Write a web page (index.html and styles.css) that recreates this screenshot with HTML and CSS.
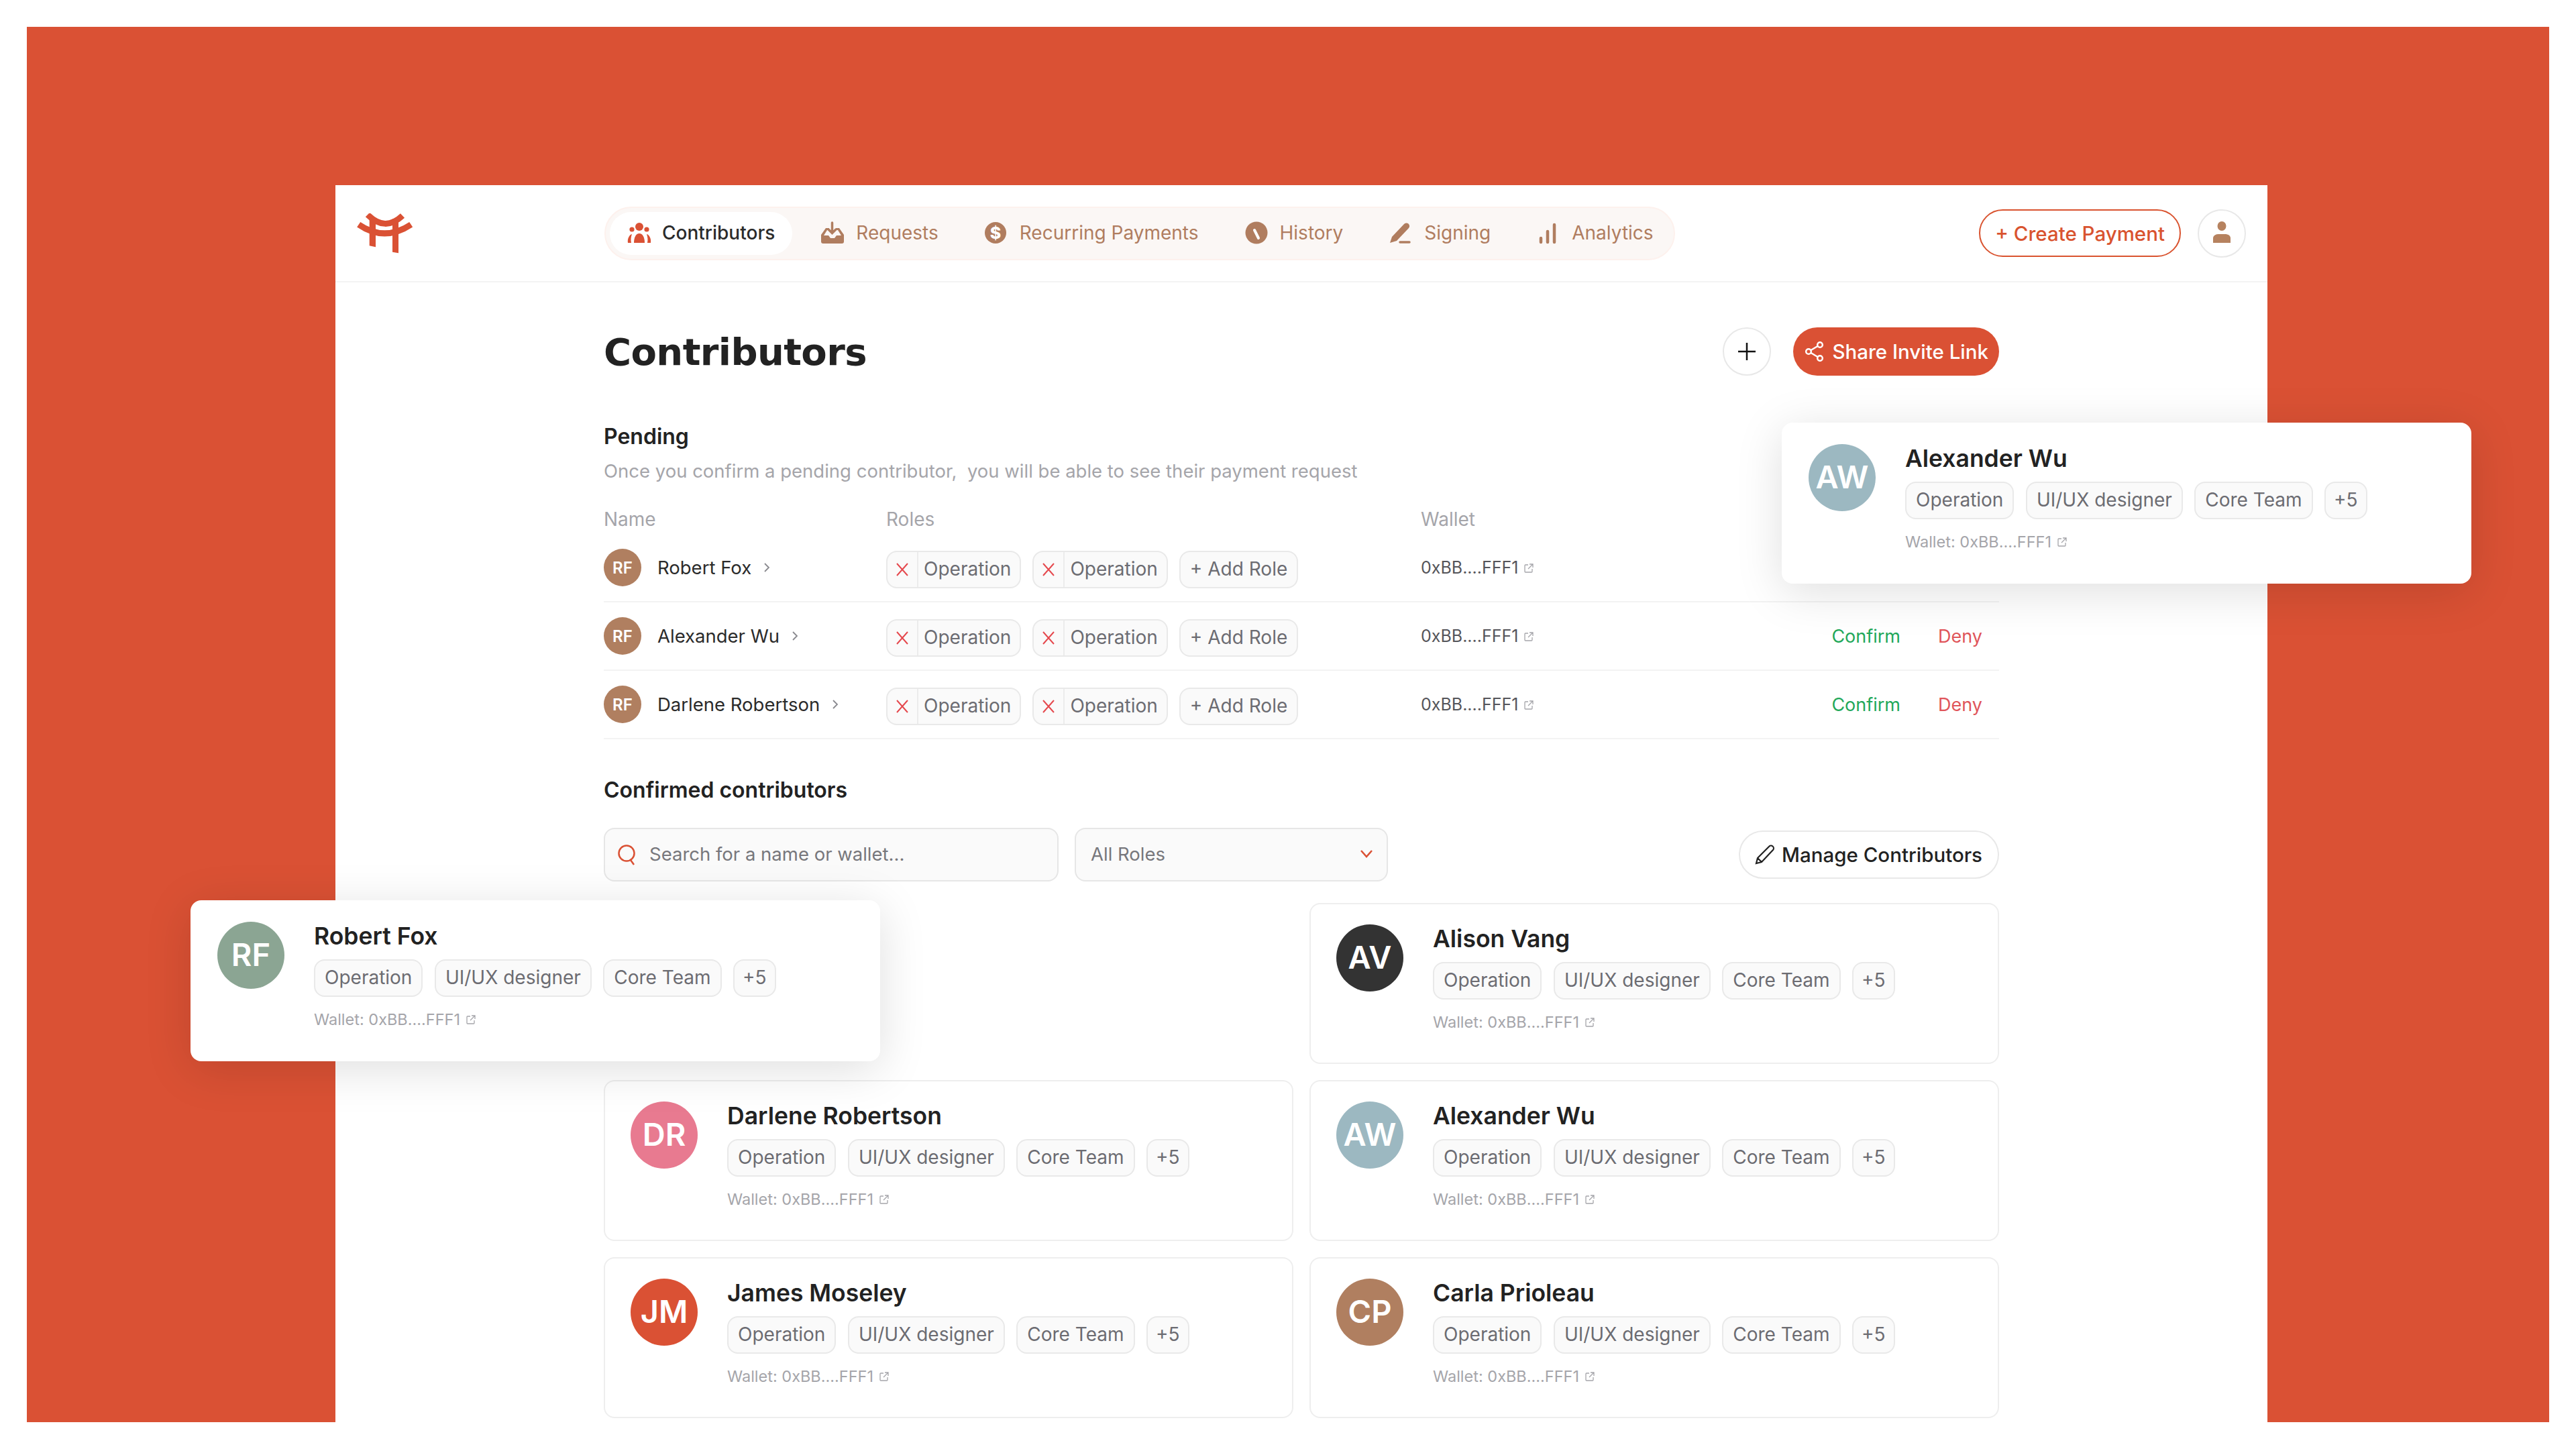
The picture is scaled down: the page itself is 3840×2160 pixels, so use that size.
FILE: index.html
```html
<!DOCTYPE html>
<html lang="en">
<head>
    <meta charset="UTF-8">
    <title>Contributors</title>
    <link rel="stylesheet" href="styles.css">
</head>
<body>
    <svg class="sprite" xmlns="http://www.w3.org/2000/svg">
        <symbol id="i-people" viewBox="0 0 36 34">
            <circle cx="18" cy="8" r="6"/><circle cx="7" cy="12" r="3.6"/><circle cx="29" cy="12" r="3.6"/>
            <path d="M10 32C10 24 13 18 18 18S26 24 26 32z"/>
            <path d="M1 32C0 26 3 20 7 19 5.500 23 5 28 6 32z"/><path d="M35 32C36 26 33 20 29 19 30.500 23 31 28 30 32z"/>
        </symbol>
        <symbol id="i-inbox" viewBox="0 0 34 34">
            <path d="M7 10h5v3H9L4 21h7l3 4h6l3-4h7l-5-8h-3v-3h5l7 10v10a3 3 0 0 1-3 3H3a3 3 0 0 1-3-3V20z"/>
            <path class="i-line" d="M16.500 2v15M11 12l5.500 5.500L22 12"/>
        </symbol>
        <symbol id="i-dollar" viewBox="0 0 34 34">
            <circle cx="16" cy="17" r="16"/>
            <text class="i-dollar-text" x="16" y="26">$</text>
        </symbol>
        <symbol id="i-clock" viewBox="0 0 34 34">
            <circle cx="17" cy="17" r="16.500"/>
            <path class="i-hand" d="M14 13l6 12"/>
        </symbol>
        <symbol id="i-pen" viewBox="0 0 34 34">
            <path d="M1 32l3-9L22 4a4.500 4.500 0 0 1 7 6L11 29z"/>
            <path class="i-line" d="M16 31h14"/>
        </symbol>
        <symbol id="i-bars" viewBox="0 0 34 34">
            <path class="i-line i-line-wide" d="M6 25v6M16 15v16M26 5v26"/>
        </symbol>
        <symbol id="i-user" viewBox="0 0 28 36">
            <ellipse cx="14" cy="7" rx="6.500" ry="7"/>
            <path d="M1 32v-7c0-4 4-6 8-6h10c4 0 8 2 8 6v7z"/>
        </symbol>
        <symbol id="i-ext" viewBox="0 0 16 16">
            <path d="M7 3H3a1 1 0 0 0-1 1v9a1 1 0 0 0 1 1h9a1 1 0 0 0 1-1V9M9 2h5v5M14 2L7 9" fill="none" stroke="currentColor" stroke-width="1.300"/>
        </symbol>
        <symbol id="i-x" viewBox="0 0 20 20">
            <path d="M2 1l16 18M18 1L2 19" fill="none" stroke="currentColor" stroke-width="2"/>
        </symbol>
        <symbol id="i-chev" viewBox="0 0 10 16">
            <path d="M2 2l6 6-6 6" fill="none" stroke="currentColor" stroke-width="1.800"/>
        </symbol>
    </svg>

    <div class="hero">
        <div class="app">
            <header class="topbar">
                <svg class="logo" viewBox="0 0 84 60">
                    <path d="M16 2Q42 28 68 3.500M2.700 16.700Q41 43 80.700 16.700" fill="none" stroke="#da5134" stroke-width="9"/>
                    <path d="M18.700 8H28V50.300L18.700 48.300zM53 8H62V59.300L53 57.700z" fill="#da5134"/>
                </svg>
                <nav class="nav">
                    <a class="nav-item active"><svg class="nav-icon people"><use href="#i-people"/></svg>Contributors</a>
                    <a class="nav-item"><svg class="nav-icon"><use href="#i-inbox"/></svg>Requests</a>
                    <a class="nav-item"><svg class="nav-icon"><use href="#i-dollar"/></svg>Recurring Payments</a>
                    <a class="nav-item"><svg class="nav-icon"><use href="#i-clock"/></svg>History</a>
                    <a class="nav-item"><svg class="nav-icon"><use href="#i-pen"/></svg>Signing</a>
                    <a class="nav-item"><svg class="nav-icon"><use href="#i-bars"/></svg>Analytics</a>
                </nav>
                <button class="btn-create">+ Create Payment</button>
                <button class="btn-round user"><svg class="user-icon"><use href="#i-user"/></svg></button>
            </header>

            <main class="content">
                <div class="title-row">
                    <h1>Contributors</h1>
                    <button class="btn-round">
                        <svg class="plus-icon" viewBox="0 0 28 28"><path d="M14 1v26M1 14h26" fill="none" stroke="#111" stroke-width="2.500"/></svg>
                    </button>
                    <button class="btn-share">
                        <svg class="share-icon" viewBox="0 0 28 30" fill="none" stroke="#fff" stroke-width="2.500">
                            <circle cx="22" cy="5" r="3.800"/><circle cx="5" cy="15" r="3.800"/><circle cx="22" cy="25" r="3.800"/>
                            <path d="M8.500 13L18.500 7M8.500 17l10 6"/>
                        </svg>
                        Share Invite Link
                    </button>
                </div>

                <h2 class="section-title">Pending</h2>
                <p class="section-sub">Once you confirm a pending contributor, &nbsp;you will be able to see their payment request</p>

                <div class="table-head">
                    <span>Name</span><span>Roles</span><span>Wallet</span>
                </div>

                <div class="row">
                    <div class="row-name"><span class="avatar-small">RF</span>Robert Fox<svg class="chev"><use href="#i-chev"/></svg></div>
                    <div class="row-roles">
                        <span class="chip chip-x"><span class="chip-close"><svg class="x-icon"><use href="#i-x"/></svg></span><span class="chip-label">Operation</span></span>
                        <span class="chip chip-x"><span class="chip-close"><svg class="x-icon"><use href="#i-x"/></svg></span><span class="chip-label">Operation</span></span>
                        <span class="chip">+ Add Role</span>
                    </div>
                    <div class="row-wallet">0xBB....FFF1<svg class="ext"><use href="#i-ext"/></svg></div>
                    <div class="row-actions"><a class="confirm">Confirm</a><a class="deny">Deny</a></div>
                </div>
                <div class="row">
                    <div class="row-name"><span class="avatar-small">RF</span>Alexander Wu<svg class="chev"><use href="#i-chev"/></svg></div>
                    <div class="row-roles">
                        <span class="chip chip-x"><span class="chip-close"><svg class="x-icon"><use href="#i-x"/></svg></span><span class="chip-label">Operation</span></span>
                        <span class="chip chip-x"><span class="chip-close"><svg class="x-icon"><use href="#i-x"/></svg></span><span class="chip-label">Operation</span></span>
                        <span class="chip">+ Add Role</span>
                    </div>
                    <div class="row-wallet">0xBB....FFF1<svg class="ext"><use href="#i-ext"/></svg></div>
                    <div class="row-actions"><a class="confirm">Confirm</a><a class="deny">Deny</a></div>
                </div>
                <div class="row">
                    <div class="row-name"><span class="avatar-small">RF</span>Darlene Robertson<svg class="chev"><use href="#i-chev"/></svg></div>
                    <div class="row-roles">
                        <span class="chip chip-x"><span class="chip-close"><svg class="x-icon"><use href="#i-x"/></svg></span><span class="chip-label">Operation</span></span>
                        <span class="chip chip-x"><span class="chip-close"><svg class="x-icon"><use href="#i-x"/></svg></span><span class="chip-label">Operation</span></span>
                        <span class="chip">+ Add Role</span>
                    </div>
                    <div class="row-wallet">0xBB....FFF1<svg class="ext"><use href="#i-ext"/></svg></div>
                    <div class="row-actions"><a class="confirm">Confirm</a><a class="deny">Deny</a></div>
                </div>

                <h2 class="section-title confirmed">Confirmed contributors</h2>

                <div class="toolbar">
                    <label class="search">
                        <svg class="search-icon" viewBox="0 0 28 32" fill="none" stroke="#da5134" stroke-width="2.500"><circle cx="14" cy="14" r="11.500"/><path d="M20 24l5 7"/></svg>
                        <input type="text" placeholder="Search for a name or wallet...">
                    </label>
                    <div class="select">All Roles
                        <svg class="select-chev" viewBox="0 0 20 14" fill="none" stroke="#da5134" stroke-width="2.500"><path d="M2 2l8 9 8-9"/></svg>
                    </div>
                    <button class="btn-manage">
                        <svg class="pencil-icon" viewBox="0 0 30 30" fill="none" stroke="#222" stroke-width="2.200"><path d="M2 28l2-8L21 3a3.500 3.500 0 0 1 6 5L10 26zM4 20l6 6"/></svg>
                        Manage Contributors
                    </button>
                </div>

                <div class="cards">
                    <div class="card-slot"></div>

                    <div class="card">
                        <span class="avatar av-dark">AV</span>
                        <div class="card-body">
                            <div class="card-name">Alison Vang</div>
                            <div class="chips"><span class="chip">Operation</span><span class="chip">UI/UX designer</span><span class="chip">Core Team</span><span class="chip">+5</span></div>
                            <div class="card-wallet">Wallet: 0xBB....FFF1<svg class="ext"><use href="#i-ext"/></svg></div>
                        </div>
                    </div>

                    <div class="card">
                        <span class="avatar av-pink">DR</span>
                        <div class="card-body">
                            <div class="card-name">Darlene Robertson</div>
                            <div class="chips"><span class="chip">Operation</span><span class="chip">UI/UX designer</span><span class="chip">Core Team</span><span class="chip">+5</span></div>
                            <div class="card-wallet">Wallet: 0xBB....FFF1<svg class="ext"><use href="#i-ext"/></svg></div>
                        </div>
                    </div>

                    <div class="card">
                        <span class="avatar av-blue">AW</span>
                        <div class="card-body">
                            <div class="card-name">Alexander Wu</div>
                            <div class="chips"><span class="chip">Operation</span><span class="chip">UI/UX designer</span><span class="chip">Core Team</span><span class="chip">+5</span></div>
                            <div class="card-wallet">Wallet: 0xBB....FFF1<svg class="ext"><use href="#i-ext"/></svg></div>
                        </div>
                    </div>

                    <div class="card">
                        <span class="avatar av-orange">JM</span>
                        <div class="card-body">
                            <div class="card-name">James Moseley</div>
                            <div class="chips"><span class="chip">Operation</span><span class="chip">UI/UX designer</span><span class="chip">Core Team</span><span class="chip">+5</span></div>
                            <div class="card-wallet">Wallet: 0xBB....FFF1<svg class="ext"><use href="#i-ext"/></svg></div>
                        </div>
                    </div>

                    <div class="card">
                        <span class="avatar av-brown">CP</span>
                        <div class="card-body">
                            <div class="card-name">Carla Prioleau</div>
                            <div class="chips"><span class="chip">Operation</span><span class="chip">UI/UX designer</span><span class="chip">Core Team</span><span class="chip">+5</span></div>
                            <div class="card-wallet">Wallet: 0xBB....FFF1<svg class="ext"><use href="#i-ext"/></svg></div>
                        </div>
                    </div>
                </div>
            </main>

            <!-- the two lifted cards lie over the page -->
            <div class="card card-float float-right">
                <span class="avatar av-blue">AW</span>
                <div class="card-body">
                    <div class="card-name">Alexander Wu</div>
                    <div class="chips"><span class="chip">Operation</span><span class="chip">UI/UX designer</span><span class="chip">Core Team</span><span class="chip">+5</span></div>
                    <div class="card-wallet">Wallet: 0xBB....FFF1<svg class="ext"><use href="#i-ext"/></svg></div>
                </div>
            </div>
            <div class="card card-float float-left">
                <span class="avatar av-green">RF</span>
                <div class="card-body">
                    <div class="card-name">Robert Fox</div>
                    <div class="chips"><span class="chip">Operation</span><span class="chip">UI/UX designer</span><span class="chip">Core Team</span><span class="chip">+5</span></div>
                    <div class="card-wallet">Wallet: 0xBB....FFF1<svg class="ext"><use href="#i-ext"/></svg></div>
                </div>
            </div>
        </div>
    </div>
</body>
</html>
```

FILE: styles.css
```css
* {
    box-sizing: border-box;
}

body {
    margin: 0;
    padding: 40px;
    height: 2160px;
    background-color: #fff;
    font-family: Inter, "Liberation Sans", sans-serif;
    font-size: 28px;
    color: #222;
}

button {
    font-family: inherit;
    font-size: 29.500px;
    font-weight: 500;
    cursor: pointer;
}

.sprite {
    display: none;
}

.hero {
    height: 2080px;
    padding: 236px 420px 0 460px;
    background-color: #da5134;
}

.app {
    position: relative;
    width: 2880px;
    height: 1844px;
    background-color: #fff;
}

/* Top bar */
.topbar {
    display: flex;
    align-items: center;
    height: 145px;
    padding: 0 32px;
    border-bottom: 2px solid #f3f3f3;
}

.logo {
    width: 84px;
    height: 60px;
    margin-right: 285px;
}

.nav {
    display: flex;
    gap: 17px;
    height: 80px;
    padding: 6px 4px 6px 6px;
    background-color: #fbf7f5;
    border: 2px solid #fdf1ed;
    border-radius: 40px;
}

.nav-item {
    display: flex;
    align-items: center;
    gap: 18px;
    padding: 0 26px 2px;
    color: #b07d5f;
    fill: #b07d5f;
    stroke: none;
    border-radius: 32px;
    white-space: nowrap;
}

.nav-item.active {
    gap: 16px;
    font-weight: 500;
    background-color: #fff;
    color: #2b2b2b;
    fill: #da5134;
}

.nav-icon {
    width: 34px;
    height: 34px;
}

.nav-icon.people {
    width: 36px;
}

.i-line {
    fill: none;
    stroke: #b07d5f;
    stroke-width: 3.500;
    stroke-linecap: round;
}

.i-line-wide {
    stroke-width: 4.500;
}

.i-hand {
    fill: none;
    stroke: #fff;
    stroke-width: 4;
    stroke-linecap: round;
}

.i-dollar-text {
    fill: #fff;
    font-size: 25px;
    font-weight: 800;
    text-anchor: middle;
}

.btn-create {
    height: 71px;
    margin-left: auto;
    padding: 0 22px;
    color: #d9532f;
    background-color: #fff;
    border: 2px solid #d9532f;
    border-radius: 36px;
}

.btn-round {
    display: flex;
    align-items: center;
    justify-content: center;
    width: 72px;
    height: 72px;
    padding: 0;
    background-color: #fff;
    border: 2px solid #e8e8e8;
    border-radius: 50%;
}

.btn-round.user {
    margin-left: 25px;
}

.user-icon {
    width: 28px;
    height: 36px;
    fill: #b6825f;
}

/* Page content */
.content {
    padding: 67px 400px 0;
}

.title-row {
    display: flex;
    align-items: center;
    height: 72px;
}

h1 {
    margin: 0 auto 0 0;
    font-family: "DejaVu Sans", sans-serif;
    font-size: 56px;
    font-weight: 700;
    letter-spacing: -0.600px;
    color: #222;
}

.plus-icon {
    width: 28px;
    height: 28px;
}

.btn-share {
    display: flex;
    align-items: center;
    gap: 12px;
    height: 72px;
    margin-left: 33px;
    padding: 0 16px 0 18px;
    color: #fff;
    background-color: #da5134;
    border: none;
    border-radius: 36px;
}

.share-icon {
    width: 28px;
    height: 30px;
}

.section-title {
    margin: 71px 0 0;
    font-size: 32px;
    line-height: 40px;
    font-weight: 600;
    color: #222;
}

.section-title.confirmed {
    margin-top: 56px;
}

.section-sub {
    margin: 13px 0 0;
    font-size: 27.500px;
    line-height: 36px;
    color: #a5a5aa;
}

.table-head,
.row {
    display: grid;
    grid-template-columns: 421px 797px 1fr auto;
}

.table-head {
    margin: 36px 0 4px;
    line-height: 36px;
    color: #a5a5aa;
}

.row {
    align-items: center;
    height: 102px;
    border-bottom: 2px solid #f3f3f3;
}

.row-name {
    display: flex;
    align-items: center;
    font-size: 27.500px;
    color: #2b2b2b;
}

.avatar-small {
    display: flex;
    align-items: center;
    justify-content: center;
    width: 56px;
    height: 56px;
    margin-right: 24px;
    border-radius: 50%;
    background-color: #b07f60;
    color: #fff;
    font-size: 24px;
    font-weight: 600;
}

.chev {
    width: 10px;
    height: 16px;
    margin-left: 18px;
    color: #8a8a8f;
}

.row-roles {
    display: flex;
    gap: 17px;
    padding-top: 6px;
}

.row-wallet {
    font-size: 25px;
    color: #55555a;
}

.row-actions {
    display: flex;
    gap: 56px;
    padding-right: 25px;
    font-size: 27px;
}

.confirm {
    color: #22a85a;
}

.deny {
    color: #e0555a;
}

.ext {
    width: 16px;
    height: 16px;
    margin-left: 8px;
    color: #a5a5aa;
}

/* Chips */
.chips {
    display: flex;
    gap: 17.500px;
}

.chip {
    display: inline-flex;
    align-items: center;
    height: 56px;
    padding: 0 14px 2px;
    font-size: 28px;
    color: #6c6c72;
    background-color: #fafafa;
    border: 2px solid #e9e9e9;
    border-radius: 16px;
    white-space: nowrap;
}

.chips .chip:last-child {
    padding: 0 12px 2px;
}

.chip-x {
    padding: 0;
}

.chip-close {
    display: flex;
    align-items: center;
    justify-content: center;
    width: 46px;
    height: 100%;
    border-right: 2px solid #ececec;
}

.chip-label {
    padding: 0 13px 2px 8px;
}

.x-icon {
    width: 20px;
    height: 20px;
    color: #e5484d;
}

/* Toolbar */
.toolbar {
    display: flex;
    align-items: center;
    gap: 24px;
    margin-top: 36px;
    height: 80px;
}

.search,
.select {
    display: flex;
    align-items: center;
    height: 80px;
    background-color: #fafafa;
    border: 2px solid #e6e6e6;
    border-radius: 16px;
}

.search {
    width: 678px;
    padding-left: 18px;
}

.search-icon {
    width: 28px;
    height: 32px;
    margin-right: 20px;
    flex-shrink: 0;
}

.search input {
    flex: 1;
    min-width: 0;
    padding: 0 0 2px;
    border: none;
    outline: none;
    background: none;
    font-family: inherit;
    font-size: 27.500px;
}

.search input::placeholder {
    color: #77777c;
    opacity: 1;
}

.select {
    justify-content: space-between;
    width: 467px;
    padding: 0 20px 2px 22px;
    color: #77777c;
    font-size: 27.500px;
}

.select-chev {
    width: 20px;
    height: 14px;
}

.btn-manage {
    display: flex;
    align-items: center;
    gap: 10px;
    height: 72px;
    margin-left: auto;
    padding: 0 23px 0 22px;
    color: #222;
    background-color: #fff;
    border: 2px solid #e8e8e8;
    border-radius: 36px;
}

.pencil-icon {
    width: 30px;
    height: 30px;
}

/* Contributor cards */
.cards {
    display: grid;
    grid-template-columns: 1fr 1fr;
    grid-auto-rows: 240px;
    gap: 24px;
    margin-top: 32px;
}

.card {
    display: flex;
    gap: 44px;
    padding: 30px 38px;
    background-color: #fff;
    border: 2px solid #eeeeee;
    border-radius: 16px;
}

.card-float {
    position: absolute;
    width: 1028px;
    height: 240px;
    padding: 32px 40px;
    border: none;
    box-shadow: 0 12px 70px rgba(0, 0, 0, 0.13);
}

.float-right {
    left: 2156px;
    top: 354px;
}

.float-left {
    left: -216px;
    top: 1066px;
}

.avatar {
    display: flex;
    align-items: center;
    justify-content: center;
    flex-shrink: 0;
    width: 100px;
    height: 100px;
    padding-bottom: 3px;
    border-radius: 50%;
    color: #fff;
    font-size: 47px;
    font-weight: 600;
}

.av-dark { background-color: #333333; }
.av-pink { background-color: #e87a90; }
.av-blue { background-color: #9cb8c1; }
.av-orange { background-color: #da5134; }
.av-brown { background-color: #b07f60; }
.av-green { background-color: #8ba593; }

.card-name {
    margin-bottom: 12px;
    font-size: 35.500px;
    line-height: 44px;
    font-weight: 600;
    color: #222;
}

.card-wallet {
    margin-top: 22px;
    font-size: 23.500px;
    line-height: 24px;
    color: #a5a5aa;
}
```
